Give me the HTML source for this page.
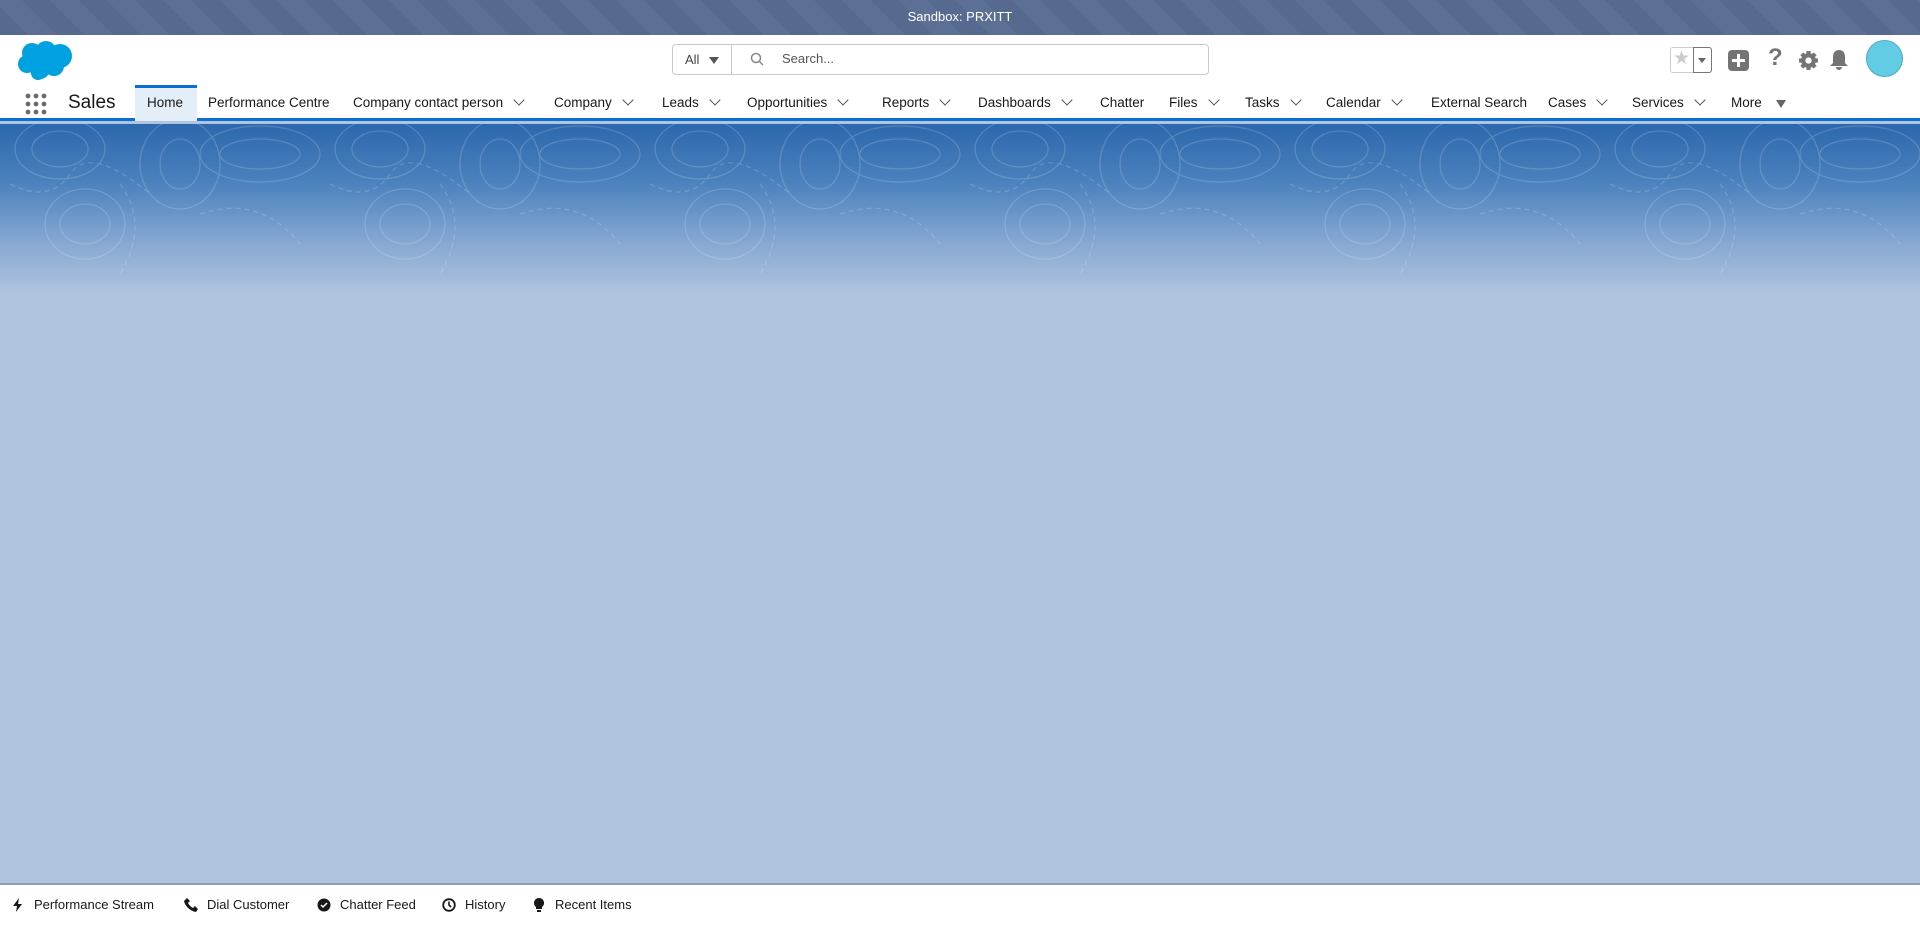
<!DOCTYPE html>
<html><head><meta charset="utf-8"><style>
*{margin:0;padding:0;box-sizing:border-box}
body{width:1920px;height:925px;overflow:hidden;background:#b0c4df;font-family:"Liberation Sans",sans-serif;position:relative;color:#181818}
.top{position:absolute;left:0;top:0;width:1920px;height:35px;background:repeating-linear-gradient(45deg,#566a90 0 20px,#5c7095 20px 40px);color:#fff;font-size:13px;text-align:center;line-height:34px}
.hdr{position:absolute;top:35px;left:0;width:1920px;height:50px;background:#fff}
.nav{position:absolute;top:85px;left:0;width:1920px;height:36px;background:#fff;border-bottom:3px solid #0b6fd1}
.nav span{position:absolute;top:10px;font-size:13.5px;color:#181818;white-space:nowrap}
.chev{display:inline-block;width:8px;height:8px;border-right:1.5px solid #555;border-bottom:1.5px solid #555;transform:rotate(45deg);margin-left:12px;position:relative;top:-3px}
.home{position:absolute;left:135px;top:0;width:62px;height:36px;background:#e4eef9;border-top:3px solid #0b6fd1}
.banner{position:absolute;top:124px;left:0;width:1920px;height:170px;background:linear-gradient(#2c68ad 0%,#4c82bd 35%,#86a8d2 70%,#b0c4df 100%);overflow:hidden}
.foot{position:absolute;top:883px;left:0;width:1920px;height:42px;background:#fff;border-top:2px solid #8a9cb8}
.foot span{position:absolute;top:12px;font-size:13px;color:#181818}
.foot svg{position:absolute;top:13px}
</style></head><body>
<div class="top">Sandbox: PRXITT</div>
<div class="hdr">
<svg style="position:absolute;left:16px;top:4px" width="58" height="42" viewBox="0 0 58 42"><g fill="#00a1e0"><circle cx="16" cy="14" r="10"/><circle cx="30" cy="12" r="10"/><circle cx="44" cy="17" r="12"/><circle cx="11" cy="25" r="9"/><circle cx="24" cy="30" r="10"/><circle cx="38" cy="27" r="10"/><circle cx="22" cy="34" r="7"/></g></svg>
<div style="position:absolute;left:672px;top:9px;width:537px;height:31px;border:1px solid #c9c9c9;border-radius:4px"></div>
<div style="position:absolute;left:731px;top:9px;width:1px;height:31px;background:#c9c9c9"></div>
<span style="position:absolute;left:685px;top:17px;font-size:13px;color:#444">All</span>
<div style="position:absolute;left:709px;top:22px;border-left:5px solid transparent;border-right:5px solid transparent;border-top:7px solid #555"></div>
<svg style="position:absolute;left:750px;top:17px" width="14" height="14" viewBox="0 0 14 14"><circle cx="6" cy="6" r="4.5" fill="none" stroke="#888" stroke-width="1.5"/><line x1="9.5" y1="9.5" x2="13" y2="13" stroke="#888" stroke-width="1.5"/></svg>
<span style="position:absolute;left:782px;top:16px;font-size:13px;color:#555">Search...</span>
<div style="position:absolute;left:1670px;top:12px;width:42px;height:26px;border:1px solid #ccc;border-radius:3px"></div>
<div style="position:absolute;left:1693px;top:12px;width:19px;height:26px;border:1px solid #777;border-radius:0 3px 3px 0"></div>
<span style="position:absolute;left:1673px;top:12px;font-size:19px;color:#ccc">★</span>
<div style="position:absolute;left:1698px;top:23px;border-left:4px solid transparent;border-right:4px solid transparent;border-top:5px solid #666"></div>
<div style="position:absolute;left:1728px;top:15px;width:21px;height:21px;background:#747474;border-radius:4px"></div>
<div style="position:absolute;left:1737px;top:19px;width:3px;height:13px;background:#fff"></div>
<div style="position:absolute;left:1732px;top:24px;width:13px;height:3px;background:#fff"></div>
<span style="position:absolute;left:1768px;top:9px;font-size:24px;font-weight:bold;color:#747474">?</span>
<svg style="position:absolute;left:1798px;top:15px" width="21" height="21" viewBox="0 0 20 20"><g fill="#747474"><circle cx="10" cy="10" r="7"/><rect x="8" y="1" width="4" height="18"/><rect x="1" y="8" width="18" height="4"/><rect x="8" y="1" width="4" height="18" transform="rotate(45 10 10)"/><rect x="8" y="1" width="4" height="18" transform="rotate(-45 10 10)"/></g><circle cx="10" cy="10" r="3" fill="#fff"/></svg>
<svg style="position:absolute;left:1829px;top:14px" width="20" height="22" viewBox="0 0 20 22"><path d="M10 1c-4 0-6 3-6 7v6l-3 3h18l-3-3V8c0-4-2-7-6-7z M7 18a3 3 0 0 0 6 0z" fill="#747474"/></svg>
<div style="position:absolute;left:1866px;top:5px;width:37px;height:37px;border-radius:50%;background:#62cce4;border:1px solid #4fa9c7"></div>
</div>
<div class="nav">
<svg style="position:absolute;left:25px;top:8px" width="22" height="22" viewBox="0 0 22 22"><g fill="#6b6b6b"><circle cx="3" cy="3" r="2.4"/><circle cx="11" cy="3" r="2.4"/><circle cx="19" cy="3" r="2.4"/><circle cx="3" cy="11" r="2.4"/><circle cx="11" cy="11" r="2.4"/><circle cx="19" cy="11" r="2.4"/><circle cx="3" cy="19" r="2.4"/><circle cx="11" cy="19" r="2.4"/><circle cx="19" cy="19" r="2.4"/></g></svg>
<span style="left:68px;top:7px;font-size:19px">Sales</span>
<div class="home"></div>
<span style="left:147px">Home</span>
<span style="left:208px">Performance Centre</span>
<span style="left:353px">Company contact person<i class="chev"></i></span>
<span style="left:554px">Company<i class="chev"></i></span>
<span style="left:662px">Leads<i class="chev"></i></span>
<span style="left:747px">Opportunities<i class="chev"></i></span>
<span style="left:882px">Reports<i class="chev"></i></span>
<span style="left:978px">Dashboards<i class="chev"></i></span>
<span style="left:1100px">Chatter</span>
<span style="left:1169px">Files<i class="chev"></i></span>
<span style="left:1245px">Tasks<i class="chev"></i></span>
<span style="left:1326px">Calendar<i class="chev"></i></span>
<span style="left:1431px">External Search</span>
<span style="left:1548px">Cases<i class="chev"></i></span>
<span style="left:1632px">Services<i class="chev"></i></span>
<span style="left:1731px">More</span>
<div style="position:absolute;left:1776px;top:15px;border-left:5px solid transparent;border-right:5px solid transparent;border-top:8px solid #666"></div>
</div>
<div class="banner">
<svg width="1920" height="170" style="position:absolute;left:0;top:0;opacity:.16" fill="none" stroke="#fff" stroke-width="1.3">
<defs><g id="t"><ellipse cx="60" cy="25" rx="45" ry="30"/><ellipse cx="60" cy="25" rx="28" ry="18"/><ellipse cx="85" cy="100" rx="40" ry="35"/><ellipse cx="85" cy="100" rx="25" ry="20"/><ellipse cx="180" cy="40" rx="40" ry="45"/><ellipse cx="180" cy="40" rx="20" ry="25"/><ellipse cx="260" cy="30" rx="60" ry="28"/><ellipse cx="260" cy="30" rx="40" ry="15"/><path d="M120 60 q30 40 0 90" stroke-dasharray="5 4"/><path d="M200 90 q60 -20 100 30" stroke-dasharray="5 4"/><path d="M10 60 q40 20 60 -10 t80 20" stroke-dasharray="5 4"/></g></defs>
<use href="#t" x="0"/><use href="#t" x="320"/><use href="#t" x="640"/><use href="#t" x="960"/><use href="#t" x="1280"/><use href="#t" x="1600"/>
</svg>
</div>
<div class="foot">
<svg style="left:12px" width="12" height="14" viewBox="0 0 12 14"><path d="M7 0L1 8h4l-1 6 6-8H6z" fill="#181818"/></svg>
<span style="left:34px">Performance Stream</span>
<svg style="left:184px" width="14" height="14" viewBox="0 0 14 14"><path d="M3 0l3 3-2 2c1 2 3 4 5 5l2-2 3 3-2 3C6 13 1 8 0 3z" fill="#181818"/></svg>
<span style="left:207px">Dial Customer</span>
<svg style="left:317px" width="14" height="14" viewBox="0 0 14 14"><circle cx="7" cy="7" r="6.5" fill="#181818"/><path d="M4 7l2 2 4-4" stroke="#fff" stroke-width="1.5" fill="none"/></svg>
<span style="left:340px">Chatter Feed</span>
<svg style="left:442px" width="14" height="14" viewBox="0 0 14 14"><circle cx="7" cy="7" r="5.8" fill="none" stroke="#181818" stroke-width="1.8"/><path d="M7 3.5V7l2 2" stroke="#181818" stroke-width="1.6" fill="none"/></svg>
<span style="left:465px">History</span>
<svg style="left:534px" width="10" height="15" viewBox="0 0 10 15"><path d="M5 0a5 5 0 0 0-3 9v2h6V9a5 5 0 0 0-3-9zM3 12h4v2H3z" fill="#181818"/></svg>
<span style="left:555px">Recent Items</span>
</div>
</body></html>
